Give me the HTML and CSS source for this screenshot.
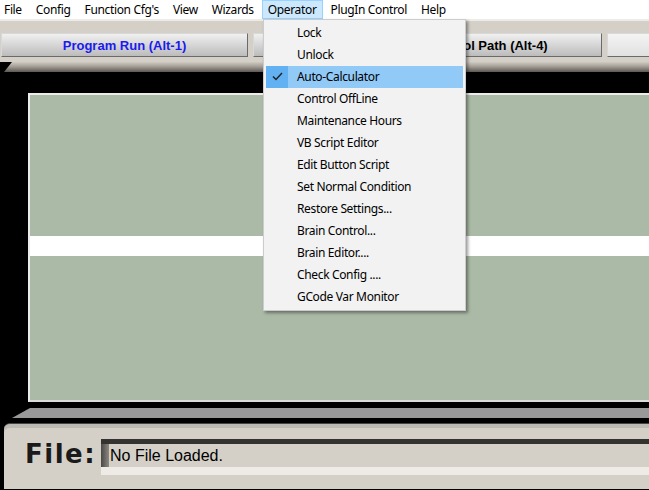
FILE: index.html
```html
<!DOCTYPE html>
<html lang="en">
<head>
    <meta charset="UTF-8">
    <title>Mach3 CNC Controller</title>
    <link rel="stylesheet" href="styles.css">
</head>
<body>
    <div class="app">
        <div class="menubar">
            <span class="menu-item">File</span>
            <span class="menu-item">Config</span>
            <span class="menu-item">Function Cfg's</span>
            <span class="menu-item">View</span>
            <span class="menu-item">Wizards</span>
            <span class="menu-item open">Operator</span>
            <span class="menu-item">PlugIn Control</span>
            <span class="menu-item">Help</span>
        </div>
        <div class="toolbar">
            <button class="tab tab-run">Program Run (Alt-1)</button>
            <button class="tab tab-mdi" title="MDI (Alt-2)"></button>
            <button class="tab tab-path">Tool Path (Alt-4)</button>
            <button class="tab tab-last" title="Offsets (Alt-5)"></button>
        </div>
        <div class="shade"></div>
        <div class="screen">
            <div class="panel">
                <div class="panel-top"></div>
                <div class="panel-band"></div>
                <div class="panel-bottom"></div>
            </div>
        </div>
        <div class="ledge"></div>
        <div class="status">
            <span class="file-label">File:</span>
            <div class="file-field">No File Loaded.</div>
        </div>

        <!-- Operator drop-down -->
        <ul class="dropdown">
            <li>Lock</li>
            <li>Unlock</li>
            <li class="checked">
                <span class="check">
                    <svg width="11" height="9" viewBox="0 0 11 9"><polyline points="1,4.5 4,7.5 10,1" fill="none" stroke="#222" stroke-width="1.5"/></svg>
                </span>
                Auto-Calculator
            </li>
            <li>Control OffLine</li>
            <li>Maintenance Hours</li>
            <li>VB Script Editor</li>
            <li>Edit Button Script</li>
            <li>Set Normal Condition</li>
            <li>Restore Settings...</li>
            <li>Brain Control...</li>
            <li>Brain Editor....</li>
            <li>Check Config ....</li>
            <li>GCode Var Monitor</li>
        </ul>
    </div>
</body>
</html>
```

FILE: styles.css
```css
body {
    margin: 0;
    background: #000;
    overflow: hidden;
}
.app {
    position: relative;
    width: 649px;
    height: 490px;
    overflow: hidden;
    font-family: 'Noto Sans', 'Segoe UI', sans-serif;
}
/* Menu bar */
.menubar {
    display: flex;
    gap: 2px;
    height: 19px;
    background: #fff;
    font-size: 12px;
    letter-spacing: -0.35px;
    color: #000;
}
.menu-item {
    padding: 0 5px;
    box-sizing: border-box;
    height: 19px;
    border: 1px solid transparent;
    line-height: 17px;
}
.menu-item:first-child {
    padding-left: 3px;
}
.menu-item.open {
    background: #cce8ff;
    border-color: #99d1ff;
}
/* Page tabs */
.toolbar {
    display: flex;
    gap: 5px;
    padding: 12px 0 5px 1px;
    background: #d4d0c8;
    border-top: 2px solid #ecebe8;
    height: 24px;
}
.tab {
    flex: none;
    height: 24px;
    padding: 0;
    border: 1px solid #6a6a6a;
    border-top-color: #d8d8d8;
    border-left-color: #d8d8d8;
    background: linear-gradient(to bottom, #f0f0f0, #bcbcbc);
    font-family: 'Liberation Sans', Arial, sans-serif;
    font-size: 13px;
    font-weight: bold;
    color: #000;
    text-align: center;
}
.tab-run {
    width: 247px;
    color: #1a1af0;
}
.tab-mdi {
    width: 136px;
}
.tab-path {
    width: 208px;
}
.tab-last {
    width: 247px;
    background: linear-gradient(to bottom, #f4f4f4, #e0e0e0);
}
.shade {
    height: 10px;
    background: linear-gradient(to bottom, #cfcbc3, #a39e96 45%, #5c5852);
    clip-path: polygon(12px 0, 100% 0, 100% 100%, 4px 100%);
}
/* DRO / display area */
.screen {
    padding: 21px 0 6px 28px;
    background: #000;
}
.panel {
    display: grid;
    grid-template-rows: 141px 20px 144px;
    border-top: 2px solid #ececec;
    border-left: 2px solid #ececec;
    border-bottom: 2px solid #dcdcdc;
    background: #abbaa6;
}
.panel-band {
    background: #fff;
}
.ledge {
    height: 10px;
    margin-bottom: 5px;
    background: #999;
    clip-path: polygon(30px 0, 100% 0, 100% 100%, 12px 100%);
}
/* File status strip */
.status {
    display: flex;
    margin-left: 4px;
    padding: 15px 0 0 21px;
    height: 66px;
    box-sizing: border-box;
    background: #d4d0c8;
    border-top: 1px solid #444;
    box-shadow: inset 0 4px 0 #bdbab4;
    border-top-left-radius: 6px;
}
.file-label {
    width: 76px;
    font-family: 'DejaVu Sans', Verdana, sans-serif;
    font-size: 26px;
    font-weight: bold;
    letter-spacing: 1.5px;
    line-height: 30px;
    color: #1a1a1a;
}
.file-field {
    flex: 1;
    height: 23px;
    padding-left: 9px;
    border-top: 5px solid #34332f;
    border-bottom: 8px solid #eeebe6;
    background: linear-gradient(to right, #4a4845, #8c8882 8px, transparent 8px), #d4d0c8;
    font-family: 'Liberation Sans', Arial, sans-serif;
    font-size: 16px;
    line-height: 23px;
    color: #000;
}
/* Drop-down menu */
.dropdown {
    position: absolute;
    left: 263px;
    top: 19px;
    width: 203px;
    height: 292px;
    box-sizing: border-box;
    margin: 0;
    padding: 2px 2px 0;
    list-style: none;
    background: #f2f2f2;
    border: 1px solid #cccccc;
    box-shadow: 2px 2px 3px rgba(0, 0, 0, 0.4);
    font-size: 12px;
    letter-spacing: -0.35px;
    color: #000;
}
.dropdown li {
    position: relative;
    height: 22px;
    line-height: 22px;
    padding-left: 31px;
}
.dropdown li.checked {
    background: #91c9f7;
}
.check {
    position: absolute;
    left: 0;
    top: 0;
    width: 22px;
    height: 22px;
    background: #62b1f3;
}
.check svg {
    position: absolute;
    left: 6px;
    top: 6px;
}
```
